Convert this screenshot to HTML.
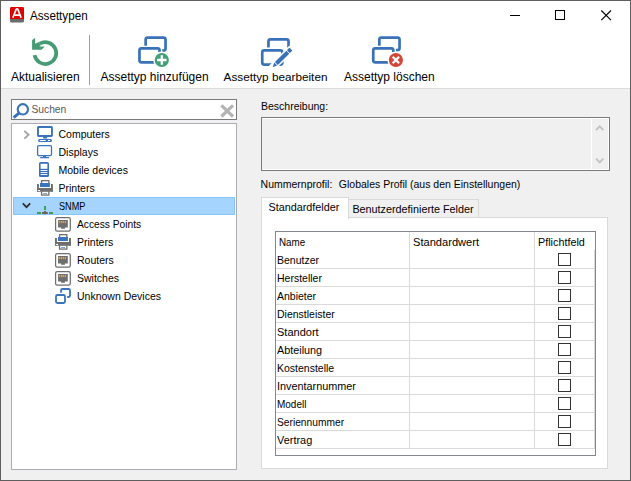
<!DOCTYPE html>
<html><head><meta charset="utf-8">
<style>
html,body{margin:0;padding:0;}
body{width:631px;height:481px;position:relative;overflow:hidden;background:#f0f0f0;font-family:"Liberation Sans",sans-serif;color:#000;}
.a{position:absolute;}
.t{position:absolute;white-space:nowrap;font-size:10.5px;line-height:14px;}
.tb{position:absolute;white-space:nowrap;font-size:12px;line-height:14px;}
svg{position:absolute;overflow:visible;}
</style></head><body>
<!-- window frame -->
<div class="a" style="left:0;top:0;width:631px;height:88px;background:#fff;"></div>
<div class="a" style="left:0;top:88px;width:631px;height:1px;background:#dcdcdc;"></div>
<div class="a" style="left:0;top:0;width:629px;height:479px;border:1px solid #5e5e5e;"></div>

<!-- title -->
<svg style="left:10px;top:7px" width="14" height="16" viewBox="0 0 14 16">
  <rect x="0" y="0" width="14" height="15.5" rx="1.5" fill="#6b6b6b"/>
  <path d="M1.5 0h11a1.5 1.5 0 0 1 1.5 1.5v10.6h-14v-10.6a1.5 1.5 0 0 1 1.5-1.5z" fill="#e00000"/>
  <path d="M2.9 10.8 L6.1 2.4 Q7 1.5 7.9 2.4 L11.1 10.8 M4.3 8.2 H9.7" fill="none" stroke="#fff" stroke-width="1.7" stroke-linejoin="round"/>
</svg>
<div class="t" style="left:30px;top:8.6px;font-size:12.8px;transform:scaleX(0.91);transform-origin:0 0;">Assettypen</div>
<!-- window controls -->
<div class="a" style="left:510px;top:15px;width:10px;height:1px;background:#000;"></div>
<div class="a" style="left:555px;top:10px;width:8px;height:8px;border:1px solid #000;"></div>
<svg style="left:601px;top:9.5px" width="11" height="11" viewBox="0 0 11 11"><path d="M0.3 0.5 L10 10.2 M10 0.5 L0.3 10.2" stroke="#000" stroke-width="1.1"/></svg>

<!-- toolbar -->
<svg style="left:30px;top:38px" width="30" height="30" viewBox="0 0 30 30">
  <path d="M4.56 17.2 A10.95 10.95 0 1 0 9.83 5.57" fill="none" stroke="#459c74" stroke-width="3.7"/>
  <path d="M2.1 1.9 L5.1 0.1 L5.1 5.8 L8.9 3.9 L10.8 7.3 L9.4 8.4 L14.7 8.4 L11.5 11.8 L2.1 11.8 Z" fill="#459c74"/>
</svg>
<div class="tb" style="left:11px;top:69.5px;">Aktualisieren</div>
<div class="a" style="left:89px;top:35px;width:1px;height:50px;background:#a0a0a0;"></div>

<!-- add icon -->
<svg style="left:130px;top:30px" width="40" height="40" viewBox="0 0 40 40">
  <rect x="15.65" y="7.55" width="19.9" height="13" rx="2" fill="none" stroke="#3a72b8" stroke-width="2.7"/>
  <rect x="9.45" y="18.45" width="20.1" height="13.9" rx="2" fill="#fff" stroke="#fff" stroke-width="5.5"/>
  <rect x="9.45" y="18.45" width="20.1" height="13.9" rx="2" fill="#fff" stroke="#3a72b8" stroke-width="2.7"/>
  <circle cx="31.8" cy="30" r="8.5" fill="#fff"/>
  <circle cx="31.8" cy="30" r="7.1" fill="#43a077"/>
  <path d="M31.8 25.3 V34.7 M27.1 30 H36.5" stroke="#fff" stroke-width="2.3"/>
</svg>
<div class="tb" style="left:100.5px;top:69.5px;">Assettyp hinzufügen</div>

<!-- edit icon -->
<svg style="left:250px;top:30px" width="45" height="40" viewBox="0 0 45 40">
  <rect x="18.45" y="9.45" width="20.1" height="12.5" rx="2" fill="none" stroke="#3a72b8" stroke-width="2.7"/>
  <rect x="12.25" y="20.35" width="20.1" height="14.2" rx="2" fill="#fff" stroke="#fff" stroke-width="5.5"/>
  <rect x="12.25" y="20.35" width="20.1" height="14.2" rx="2" fill="#fff" stroke="#3a72b8" stroke-width="2.7"/>
  <g transform="translate(22.6 37.2) rotate(-44.5)">
    <path d="M-1.5 -3.6 H27.2 V3.6 H-1.5 Z" fill="#fff"/>
    <path d="M0 0 L4.4 -2.1 V2.1 Z" fill="#3a72b8"/>
    <rect x="5.3" y="-2.1" width="16" height="4.2" fill="#3a72b8"/>
    <rect x="22.1" y="-2.1" width="3.6" height="4.2" rx="0.6" fill="#3a72b8"/>
  </g>
</svg>
<div class="tb" style="left:223.6px;top:69.5px;font-size:11.75px;">Assettyp bearbeiten</div>

<!-- delete icon -->
<svg style="left:360px;top:30px" width="45" height="40" viewBox="0 0 45 40">
  <rect x="19.35" y="7.55" width="20.2" height="12.5" rx="2" fill="none" stroke="#3a72b8" stroke-width="2.7"/>
  <rect x="13.25" y="18.45" width="20.1" height="13.9" rx="2" fill="#fff" stroke="#fff" stroke-width="5.5"/>
  <rect x="13.25" y="18.45" width="20.1" height="13.9" rx="2" fill="#fff" stroke="#3a72b8" stroke-width="2.7"/>
  <circle cx="35.9" cy="30" r="8.5" fill="#fff"/>
  <circle cx="35.9" cy="30" r="7.1" fill="#d4473a"/>
  <path d="M32.7 26.8 L39.1 33.2 M39.1 26.8 L32.7 33.2" stroke="#fff" stroke-width="2.3"/>
</svg>
<div class="tb" style="left:344px;top:69.5px;">Assettyp löschen</div>

<!-- search box -->
<div class="a" style="left:11px;top:99px;width:224px;height:19px;border:1px solid #7a7a7a;background:#fff;"></div>
<svg style="left:12px;top:102px" width="18" height="18" viewBox="0 0 18 18">
  <circle cx="10.85" cy="7.3" r="5.15" fill="none" stroke="#3a72b8" stroke-width="2.1"/>
  <path d="M7.6 10.6 L1.6 15.7" stroke="#3a72b8" stroke-width="3"/>
</svg>
<div class="t" style="left:31.4px;top:103px;color:#585858;font-size:10.3px;">Suchen</div>
<svg style="left:220px;top:104px" width="15" height="14" viewBox="0 0 15 14">
  <path d="M1.4 1.4 L13 12.5 M13 1.4 L1.4 12.5" stroke="#b4b4b4" stroke-width="3.2"/>
</svg>

<!-- tree -->
<div class="a" style="left:11px;top:123px;width:224px;height:345px;border:1px solid #abadb3;background:#fff;"></div>
<!-- selection -->
<div class="a" style="left:13px;top:197px;width:220px;height:16px;border:1px solid #84c5fd;background:#a5d4fe;"></div>

<!-- chevrons -->
<svg style="left:23px;top:130px" width="8" height="10" viewBox="0 0 8 10"><path d="M1.3 0.9 L5.6 4.8 L1.3 8.7" fill="none" stroke="#a2a2a2" stroke-width="1.8"/></svg>
<svg style="left:22px;top:202px" width="10" height="8" viewBox="0 0 10 8"><path d="M0.8 1.3 L4.5 5.2 L8.2 1.3" fill="none" stroke="#2d2d2d" stroke-width="1.7"/></svg>

<!-- Computers icon -->
<svg style="left:37px;top:126px" width="16" height="17" viewBox="0 0 16 17">
  <rect x="0.95" y="0.95" width="14" height="9" rx="0.6" fill="none" stroke="#3a74bc" stroke-width="1.9"/>
  <rect x="6.1" y="10.5" width="4.1" height="2" fill="#3a74bc"/>
  <rect x="1.1" y="12.9" width="13.9" height="3.2" rx="1.5" fill="#3a74bc"/>
  <rect x="2.7" y="14" width="6.1" height="1.1" rx="0.5" fill="#fff"/>
  <rect x="10.8" y="14" width="2.4" height="1.1" rx="0.5" fill="#fff"/>
</svg>
<div class="t" style="left:58.5px;top:127.4px;">Computers</div>
<!-- Displays icon -->
<svg style="left:37px;top:145px" width="16" height="16" viewBox="0 0 16 16">
  <rect x="0.6" y="0.6" width="13.9" height="10" rx="1.3" fill="none" stroke="#3a74bc" stroke-width="1.3"/>
  <rect x="6.1" y="11" width="2.9" height="1.5" fill="#3a74bc"/>
  <rect x="3" y="12" width="9.1" height="1.2" rx="0.5" fill="#3a74bc"/>
</svg>
<div class="t" style="left:58.5px;top:145.4px;">Displays</div>
<!-- Mobile icon -->
<svg style="left:37px;top:162px" width="16" height="16" viewBox="0 0 16 16">
  <rect x="2" y="0" width="10" height="15" rx="1.6" fill="#3a72b8"/>
  <rect x="3.6" y="1.8" width="6.8" height="5" fill="#fff"/>
  <rect x="3.6" y="8" width="6.8" height="0.9" fill="#fff"/>
  <rect x="3.6" y="10" width="6.8" height="0.9" fill="#fff"/>
  <rect x="3.6" y="12" width="6.8" height="0.9" fill="#fff"/>
</svg>
<div class="t" style="left:58.5px;top:163.4px;">Mobile devices</div>
<!-- Printer icon -->
<svg style="left:37px;top:180px" width="16" height="16" viewBox="0 0 16 16">
  <rect x="0" y="4" width="1.9" height="7.7" fill="#6e6e6e"/>
  <rect x="14" y="4" width="1.9" height="7.7" fill="#6e6e6e"/>
  <rect x="0" y="7.8" width="15.9" height="3.9" fill="#6e6e6e"/>
  <rect x="2" y="2.2" width="11.9" height="5.6" fill="#fff"/>
  <rect x="4.55" y="0.65" width="7.3" height="4" fill="#fff" stroke="#707070" stroke-width="1.3"/>
  <rect x="3" y="3" width="9.9" height="4" fill="#3a74bc"/>
  <rect x="0.9" y="10" width="2.1" height="1" fill="#fff"/>
  <rect x="4.55" y="11.15" width="7.3" height="3.9" fill="#fff" stroke="#707070" stroke-width="1.3"/>
  <rect x="6.1" y="13.1" width="3.9" height="0.8" fill="#5a8fcc"/>
</svg>
<div class="t" style="left:58.5px;top:181.4px;">Printers</div>
<!-- SNMP icon -->
<svg style="left:37px;top:198px" width="16" height="16" viewBox="0 0 16 16">
  <rect x="7" y="8" width="2" height="4" fill="#3aa05a"/>
  <rect x="0" y="14" width="4" height="2" fill="#3aa05a"/>
  <rect x="12" y="14" width="4" height="2" fill="#3aa05a"/>
  <rect x="5" y="14" width="5.8" height="2" fill="#6e6458"/>
  <rect x="7" y="13" width="2" height="1" fill="#6e6458"/>
</svg>
<div class="t" style="left:58.6px;top:199px;transform:scaleX(0.87);transform-origin:0 0;">SNMP</div>

<!-- children -->
<svg style="left:55px;top:217px" width="16" height="16" viewBox="0 0 16 16">
  <rect x="0.6" y="0.6" width="14.7" height="13.4" rx="1.6" fill="#fff" stroke="#6e6e6e" stroke-width="1.25"/>
  <path d="M3 3 H12.8 V10.5 H9.9 V11.7 H6.1 V10.5 H3 Z" fill="#6e6e6e"/>
  <rect x="3.7" y="4" width="1.1" height="2.1" fill="#f0b040"/><rect x="5.75" y="4" width="1.1" height="2.1" fill="#f0b040"/><rect x="7.65" y="4" width="1.1" height="2.1" fill="#f0b040"/><rect x="9.75" y="4" width="1.1" height="2.1" fill="#f0b040"/>
</svg>
<div class="t" style="left:77px;top:217.4px;transform:scaleX(0.973);transform-origin:0 0;">Access Points</div>
<svg style="left:55px;top:234px" width="16" height="16" viewBox="0 0 16 16">
  <rect x="0" y="4" width="1.9" height="7.7" fill="#6e6e6e"/>
  <rect x="14" y="4" width="1.9" height="7.7" fill="#6e6e6e"/>
  <rect x="0" y="7.8" width="15.9" height="3.9" fill="#6e6e6e"/>
  <rect x="2" y="2.2" width="11.9" height="5.6" fill="#fff"/>
  <rect x="4.55" y="0.65" width="7.3" height="4" fill="#fff" stroke="#707070" stroke-width="1.3"/>
  <rect x="3" y="3" width="9.9" height="4" fill="#3a74bc"/>
  <rect x="0.9" y="10" width="2.1" height="1" fill="#fff"/>
  <rect x="4.55" y="11.15" width="7.3" height="3.9" fill="#fff" stroke="#707070" stroke-width="1.3"/>
  <rect x="6.1" y="13.1" width="3.9" height="0.8" fill="#5a8fcc"/>
</svg>
<div class="t" style="left:77px;top:235.4px;">Printers</div>
<svg style="left:55px;top:253px" width="16" height="16" viewBox="0 0 16 16">
  <rect x="0.6" y="0.6" width="14.7" height="13.4" rx="1.6" fill="#fff" stroke="#6e6e6e" stroke-width="1.25"/>
  <path d="M3 3 H12.8 V10.5 H9.9 V11.7 H6.1 V10.5 H3 Z" fill="#6e6e6e"/>
  <rect x="3.7" y="4" width="1.1" height="2.1" fill="#f0b040"/><rect x="5.75" y="4" width="1.1" height="2.1" fill="#f0b040"/><rect x="7.65" y="4" width="1.1" height="2.1" fill="#f0b040"/><rect x="9.75" y="4" width="1.1" height="2.1" fill="#f0b040"/>
</svg>
<div class="t" style="left:77px;top:253.4px;">Routers</div>
<svg style="left:55px;top:271px" width="16" height="16" viewBox="0 0 16 16">
  <rect x="0.6" y="0.6" width="14.7" height="13.4" rx="1.6" fill="#fff" stroke="#6e6e6e" stroke-width="1.25"/>
  <path d="M3 3 H12.8 V10.5 H9.9 V11.7 H6.1 V10.5 H3 Z" fill="#6e6e6e"/>
  <rect x="3.7" y="4" width="1.1" height="2.1" fill="#f0b040"/><rect x="5.75" y="4" width="1.1" height="2.1" fill="#f0b040"/><rect x="7.65" y="4" width="1.1" height="2.1" fill="#f0b040"/><rect x="9.75" y="4" width="1.1" height="2.1" fill="#f0b040"/>
</svg>
<div class="t" style="left:77px;top:271.4px;">Switches</div>
<svg style="left:55px;top:288px" width="17" height="17" viewBox="0 0 17 17">
  <rect x="6" y="1" width="9" height="8" rx="1.4" fill="none" stroke="#3a74bc" stroke-width="1.8"/>
  <rect x="1" y="7" width="9" height="8" rx="1.4" fill="#fff" stroke="#fff" stroke-width="4.4"/>
  <rect x="1" y="7" width="9" height="8" rx="1.4" fill="#fff" stroke="#3a74bc" stroke-width="1.8"/>
</svg>
<div class="t" style="left:77px;top:289.4px;">Unknown Devices</div>

<!-- right panel -->
<div class="t" style="left:261px;top:99.3px;">Beschreibung:</div>
<div class="a" style="left:261px;top:117px;width:347px;height:52px;border:1px solid #7a7a7a;background:#f0f0f0;"></div>
<div class="a" style="left:262px;top:118px;width:347px;height:1px;background:#fff;"></div>
<div class="a" style="left:608px;top:118px;width:1px;height:52px;background:#fff;"></div>
<div class="a" style="left:262px;top:169px;width:347px;height:1px;background:#fff;"></div>
<div class="a" style="left:591px;top:118px;width:1px;height:51px;background:#fff;"></div>
<svg style="left:595px;top:124px" width="10" height="8" viewBox="0 0 10 8"><path d="M1.1 6 L4.7 2.3 L8.3 6" fill="none" stroke="#c2c2c2" stroke-width="1.8"/></svg>
<svg style="left:595px;top:157px" width="10" height="8" viewBox="0 0 10 8"><path d="M1.1 1.7 L4.7 5.4 L8.3 1.7" fill="none" stroke="#c2c2c2" stroke-width="1.8"/></svg>

<div class="t" style="left:260.6px;top:176.8px;">Nummernprofil:</div>
<div class="t" style="left:338.8px;top:176.8px;">Globales Profil (aus den Einstellungen)</div>

<!-- tabs -->
<div class="a" style="left:261px;top:217px;width:345px;height:250px;border:1px solid #d9d9d9;background:#fff;"></div>
<div class="a" style="left:348px;top:199px;width:129px;height:17px;border:1px solid #d9d9d9;border-bottom:none;background:#f0f0f0;"></div>
<div class="a" style="left:261px;top:197px;width:86px;height:21px;border:1px solid #d9d9d9;border-bottom:none;background:#fff;"></div>
<div class="t" style="left:268.5px;top:200.4px;font-size:10.8px;">Standardfelder</div>
<div class="t" style="left:352.4px;top:202.3px;font-size:10.8px;">Benutzerdefinierte Felder</div>

<!-- grid -->
<div class="a" style="left:275px;top:231px;width:319px;height:223px;border:1px solid #828790;background:#fff;"></div>
<div id="grid"></div>
<div class="t" style="left:278.7px;top:234.9px;transform:scaleX(0.936);transform-origin:0 0;">Name</div>
<div class="t" style="left:412.8px;top:234.9px;transform:scaleX(1.058);transform-origin:0 0;">Standardwert</div>
<div class="t" style="left:537.5px;top:234.9px;transform:scaleX(1.03);transform-origin:0 0;">Pflichtfeld</div>
<div class="a" style="left:409px;top:232px;width:1px;height:217px;background:#dadada;"></div>
<div class="a" style="left:534px;top:232px;width:1px;height:217px;background:#dadada;"></div>
<div class="a" style="left:594px;top:250px;width:1px;height:199px;background:#dadada;"></div>
<div class="a" style="left:276px;top:268px;width:318px;height:1px;background:#dadada;"></div>
<div class="t" style="left:277px;top:252.66px;">Benutzer</div>
<div class="a" style="left:558px;top:253px;width:11px;height:11px;border:1px solid #333;background:#fff;"></div>
<div class="a" style="left:276px;top:286px;width:318px;height:1px;background:#dadada;"></div>
<div class="t" style="left:277px;top:270.66px;">Hersteller</div>
<div class="a" style="left:558px;top:271px;width:11px;height:11px;border:1px solid #333;background:#fff;"></div>
<div class="a" style="left:276px;top:304px;width:318px;height:1px;background:#dadada;"></div>
<div class="t" style="left:277px;top:288.66px;">Anbieter</div>
<div class="a" style="left:558px;top:289px;width:11px;height:11px;border:1px solid #333;background:#fff;"></div>
<div class="a" style="left:276px;top:322px;width:318px;height:1px;background:#dadada;"></div>
<div class="t" style="left:277px;top:306.66px;">Dienstleister</div>
<div class="a" style="left:558px;top:307px;width:11px;height:11px;border:1px solid #333;background:#fff;"></div>
<div class="a" style="left:276px;top:340px;width:318px;height:1px;background:#dadada;"></div>
<div class="t" style="left:277px;top:324.66px;transform:scaleX(1.05);transform-origin:0 0;">Standort</div>
<div class="a" style="left:558px;top:325px;width:11px;height:11px;border:1px solid #333;background:#fff;"></div>
<div class="a" style="left:276px;top:358px;width:318px;height:1px;background:#dadada;"></div>
<div class="t" style="left:277px;top:342.66px;transform:scaleX(1.03);transform-origin:0 0;">Abteilung</div>
<div class="a" style="left:558px;top:343px;width:11px;height:11px;border:1px solid #333;background:#fff;"></div>
<div class="a" style="left:276px;top:376px;width:318px;height:1px;background:#dadada;"></div>
<div class="t" style="left:277px;top:360.66px;">Kostenstelle</div>
<div class="a" style="left:558px;top:361px;width:11px;height:11px;border:1px solid #333;background:#fff;"></div>
<div class="a" style="left:276px;top:394px;width:318px;height:1px;background:#dadada;"></div>
<div class="t" style="left:277px;top:378.66px;transform:scaleX(1.032);transform-origin:0 0;">Inventarnummer</div>
<div class="a" style="left:558px;top:379px;width:11px;height:11px;border:1px solid #333;background:#fff;"></div>
<div class="a" style="left:276px;top:412px;width:318px;height:1px;background:#dadada;"></div>
<div class="t" style="left:277px;top:396.66px;transform:scaleX(0.95);transform-origin:0 0;">Modell</div>
<div class="a" style="left:558px;top:397px;width:11px;height:11px;border:1px solid #333;background:#fff;"></div>
<div class="a" style="left:276px;top:430px;width:318px;height:1px;background:#dadada;"></div>
<div class="t" style="left:277px;top:414.66px;transform:scaleX(0.974);transform-origin:0 0;">Seriennummer</div>
<div class="a" style="left:558px;top:415px;width:11px;height:11px;border:1px solid #333;background:#fff;"></div>
<div class="a" style="left:276px;top:448px;width:318px;height:1px;background:#dadada;"></div>
<div class="t" style="left:277px;top:432.66px;transform:scaleX(1.04);transform-origin:0 0;">Vertrag</div>
<div class="a" style="left:558px;top:433px;width:11px;height:11px;border:1px solid #333;background:#fff;"></div>
</body></html>
